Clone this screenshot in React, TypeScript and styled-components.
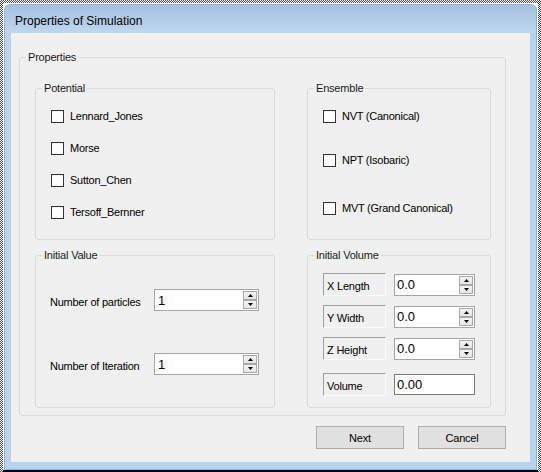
import React from "react";
import styled, { createGlobalStyle } from "styled-components";

const GlobalStyle = createGlobalStyle`
  html, body { margin: 0; padding: 0; background: #fff; }
  body {
    font-family: "Liberation Sans", Arial, sans-serif;
    font-size: 11px;
    color: #000;
  }
`;

const Selection = styled.div`
  width: 541px;
  height: 472px;
  box-sizing: border-box;
  padding: 3px 3px 0 3px;
  background: repeating-conic-gradient(#4a4a4a 0 25%, #ffffff 0 50%) 0 0 / 2px 2px;
`;

const Canvas = styled.div`
  height: 100%;
  box-sizing: border-box;
  background: #fff;
  padding: 1px 1px 0 1px;
  border-bottom: 2px solid #000;
`;

const Window = styled.div`
  height: 100%;
  box-sizing: border-box;
  display: flex;
  flex-direction: column;
  border: 1px solid #8fb2d6;
  border-right-color: #62c3ee;
  border-bottom-color: #62c3ee;
  border-radius: 6px 6px 0 0;
  background: #bad2eb;
  overflow: hidden;
`;

const TitleBar = styled.div`
  height: 28px;
  box-sizing: border-box;
  padding: 9px 0 0 10px;
  font-size: 12px;
  line-height: 15px;
  color: #000;
  background: linear-gradient(to bottom, #a4c1e1 0%, #b3cde8 55%, #bfd6ee 100%);
`;

const Frame = styled.div`
  flex: 1;
  display: flex;
  padding: 0 6px 7px 6px;
  min-height: 0;
`;

const Client = styled.div`
  flex: 1;
  background: #f0f0f0;
  box-sizing: border-box;
  padding: 17px 0 0 8px;
  display: flex;
  flex-direction: column;
`;

const GroupBox = styled.fieldset<{ $w: number; $h: number }>`
  margin: 0;
  padding: 0;
  min-width: 0;
  box-sizing: border-box;
  width: ${(p) => p.$w}px;
  height: ${(p) => p.$h}px;
  border: 1px solid #d5dadf;
  border-radius: 3px;
`;

const Legend = styled.legend`
  margin-left: 6px;
  padding: 0 2px;
  font-size: 11px;
  line-height: 14px;
  letter-spacing: -0.2px;
  color: #1a1a1a;
`;

const PropsGrid = styled.div`
  display: grid;
  grid-template-columns: 240px 184px;
  grid-template-rows: 159px 160px;
  column-gap: 32px;
  row-gap: 8px;
  padding: 17px 0 0 15px;
`;

const CheckList = styled.div`
  display: flex;
  flex-direction: column;
  padding: 13px 0 0 15px;
`;

const CheckRow = styled.label<{ $top: number }>`
  display: flex;
  align-items: center;
  height: 16px;
  margin-top: ${(p) => p.$top}px;
  letter-spacing: -0.25px;
`;

const Check = styled.input`
  appearance: none;
  -webkit-appearance: none;
  width: 13px;
  height: 13px;
  margin: 0 6px 0 0;
  box-sizing: border-box;
  border: 1px solid #333;
  background: #fff;
`;

const ValueList = styled.div`
  display: flex;
  flex-direction: column;
  padding: 27px 0 0 14px;
  gap: 42px;
`;

const ValueRow = styled.div`
  display: flex;
  align-items: center;
  height: 22px;
`;

const ValueLabel = styled.span`
  width: 104px;
  padding-top: 4px;
  line-height: 14px;
  letter-spacing: -0.25px;
`;

const Field = styled.div<{ $w: number; $h: number; $dark?: boolean }>`
  display: flex;
  align-items: center;
  box-sizing: border-box;
  width: ${(p) => p.$w}px;
  height: ${(p) => p.$h}px;
  background: #fff;
  border: 1px solid ${(p) => (p.$dark ? "#7a7a7a" : "#a5a5a5")};
`;

const FieldInput = styled.input<{ $pad: number }>`
  flex: 1;
  min-width: 0;
  border: none;
  outline: none;
  background: transparent;
  margin: 0;
  padding: 0 0 0 ${(p) => p.$pad}px;
  font-family: "Liberation Sans", Arial, sans-serif;
  font-size: 13px;
  color: #000;
`;

const Spinner = styled.div`
  display: flex;
  flex-direction: column;
  margin-right: 1px;
`;

const SpinBtn = styled.div`
  width: 14px;
  height: 9px;
  box-sizing: border-box;
  border: 1px solid #a9a9a9;
  background: linear-gradient(to bottom, #f4f4f4, #e4e4e4);
  display: flex;
  align-items: center;
  justify-content: center;
`;

const VolumeList = styled.div`
  display: flex;
  flex-direction: column;
  padding: 11px 0 0 15px;
`;

const VolumeRow = styled.div<{ $top: number }>`
  display: flex;
  align-items: center;
  gap: 8px;
  margin-top: ${(p) => p.$top}px;
`;

const LabelBox = styled.div`
  width: 63px;
  height: 23px;
  box-sizing: border-box;
  display: flex;
  align-items: center;
  padding: 2px 0 0 3px;
  border: 1px solid;
  border-color: #a0a0a0 #fcfcfc #fcfcfc #a0a0a0;
  letter-spacing: -0.2px;
`;

const ButtonRow = styled.div`
  display: flex;
  justify-content: flex-end;
  gap: 14px;
  width: 487px;
  margin-top: 10px;
`;

const Button = styled.button`
  width: 88px;
  height: 23px;
  box-sizing: border-box;
  margin: 0;
  padding: 0;
  border: 1px solid #adadad;
  background: #e1e1e1;
  font-family: "Liberation Sans", Arial, sans-serif;
  font-size: 11px;
  letter-spacing: -0.2px;
  color: #000;
`;

const Arrow = ({ up }: { up?: boolean }) => (
  <svg width="5" height="3" viewBox="0 0 5 3">
    <polygon points={up ? "2.5,0 5,3 0,3" : "0,0 5,0 2.5,3"} fill="#000" />
  </svg>
);

const Spin = () => (
  <Spinner>
    <SpinBtn>
      <Arrow up />
    </SpinBtn>
    <SpinBtn>
      <Arrow />
    </SpinBtn>
  </Spinner>
);

const potentials = [
  { label: "Lennard_Jones", top: 0 },
  { label: "Morse", top: 16 },
  { label: "Sutton_Chen", top: 16 },
  { label: "Tersoff_Bernner", top: 16 },
];

const ensembles = [
  { label: "NVT (Canonical)", top: 0 },
  { label: "NPT (Isobaric)", top: 28 },
  { label: "MVT (Grand Canonical)", top: 32 },
];

const volumes = [
  { label: "X Length", value: "0.0", top: 0, spin: true },
  { label: "Y Width", value: "0.0", top: 9, spin: true },
  { label: "Z Height", value: "0.0", top: 9, spin: true },
  { label: "Volume", value: "0.00", top: 13, spin: false },
];

export default function App() {
  return (
    <>
      <GlobalStyle />
      <Selection>
        <Canvas>
          <Window>
            <TitleBar>Properties of Simulation</TitleBar>
            <Frame>
              <Client>
                <GroupBox $w={487} $h={366}>
                  <Legend>Properties</Legend>
                  <PropsGrid>
                    <GroupBox $w={240} $h={159}>
                      <Legend>Potential</Legend>
                      <CheckList>
                        {potentials.map((p) => (
                          <CheckRow key={p.label} $top={p.top}>
                            <Check type="checkbox" />
                            {p.label}
                          </CheckRow>
                        ))}
                      </CheckList>
                    </GroupBox>
                    <GroupBox $w={184} $h={159}>
                      <Legend>Ensemble</Legend>
                      <CheckList>
                        {ensembles.map((p) => (
                          <CheckRow key={p.label} $top={p.top}>
                            <Check type="checkbox" />
                            {p.label}
                          </CheckRow>
                        ))}
                      </CheckList>
                    </GroupBox>
                    <GroupBox $w={240} $h={160}>
                      <Legend>Initial Value</Legend>
                      <ValueList>
                        <ValueRow>
                          <ValueLabel>Number of particles</ValueLabel>
                          <Field $w={105} $h={22}>
                            <FieldInput $pad={3} defaultValue="1" />
                            <Spin />
                          </Field>
                        </ValueRow>
                        <ValueRow>
                          <ValueLabel>Number of Iteration</ValueLabel>
                          <Field $w={105} $h={22}>
                            <FieldInput $pad={3} defaultValue="1" />
                            <Spin />
                          </Field>
                        </ValueRow>
                      </ValueList>
                    </GroupBox>
                    <GroupBox $w={184} $h={160}>
                      <Legend>Initial Volume</Legend>
                      <VolumeList>
                        {volumes.map((v) => (
                          <VolumeRow key={v.label} $top={v.top}>
                            <LabelBox>{v.label}</LabelBox>
                            <Field $w={81} $h={v.spin ? 22 : 21} $dark={!v.spin}>
                              <FieldInput $pad={2} defaultValue={v.value} />
                              {v.spin && <Spin />}
                            </Field>
                          </VolumeRow>
                        ))}
                      </VolumeList>
                    </GroupBox>
                  </PropsGrid>
                </GroupBox>
                <ButtonRow>
                  <Button>Next</Button>
                  <Button>Cancel</Button>
                </ButtonRow>
              </Client>
            </Frame>
          </Window>
        </Canvas>
      </Selection>
    </>
  );
}
